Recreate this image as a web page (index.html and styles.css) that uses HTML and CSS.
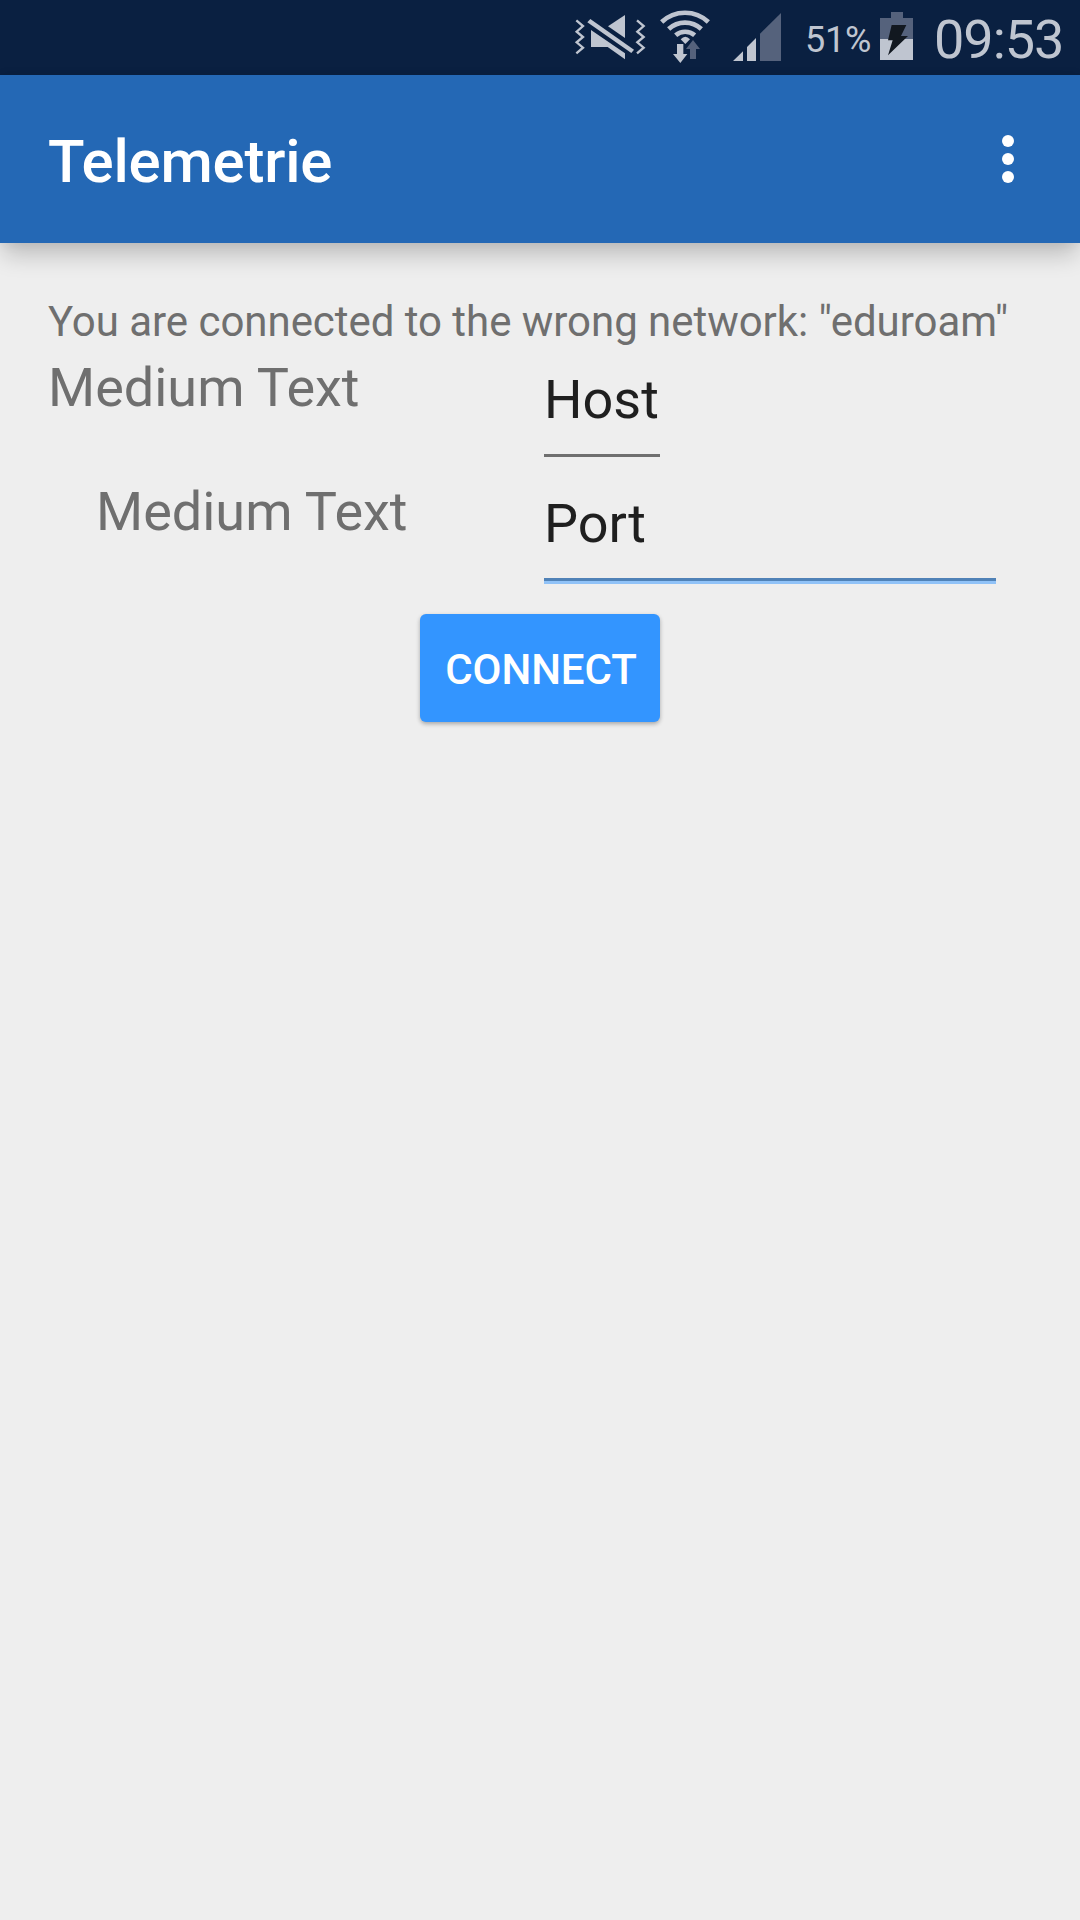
FILE: index.html
```html
<!DOCTYPE html>
<html lang="en">
<head>
<meta charset="utf-8">
<title>Telemetrie</title>
<link rel="stylesheet" href="styles.css">
</head>
<body>
<div class="status-bar">
  <svg class="icon-vibrate" width="72" height="48" viewBox="42 36 216 144" aria-hidden="true">
    <g fill="none" stroke="#bfc5d0" stroke-width="7">
      <path d="M49 61L69 78L50 95L69 111L50 127L69 143L49 160"/>
      <path d="M231 61L251 78L232 95L251 111L232 127L251 143L231 160"/>
    </g>
    <g fill="#bfc5d0">
      <path d="M195 45V114L144 79Z"/>
      <path d="M91 57L222 149L214 159L82 67Z"/>
      <path d="M93 90L195 160V178L143 141H93Z"/>
    </g>
  </svg>
  <svg class="icon-wifi" width="50" height="56" viewBox="300 24 150 168" aria-hidden="true">
    <g fill="none" stroke="#bfc5d0" stroke-width="14">
      <path d="M305 66A102 102 0 0 1 445 66"/>
      <path d="M326 87A72 72 0 0 1 424 87"/>
      <path d="M347 106A43 43 0 0 1 404 106"/>
    </g>
    <path fill="#bfc5d0" d="M362 118Q376 103 390 118L376 132Z"/>
    <path fill="#bfc5d0" d="M351 132H370V162H382L361 189L339 162H351Z"/>
    <path fill="#55627c" d="M399 120L420 147H408V177H390V147H378Z"/>
  </svg>
  <svg class="icon-signal" width="48" height="48" viewBox="519 39 144 144" aria-hidden="true">
    <path fill="#bfc5d0" d="M519 183L549 154V183ZM561 183V141L588 114V183Z"/>
    <path fill="#55627c" d="M600 183V101L663 39V183Z"/>
  </svg>
  <span class="battery-level">51%</span>
  <svg class="icon-battery" width="33" height="48" viewBox="240 36 99 144" aria-hidden="true">
    <path fill="#55627c" d="M273 36H309V54H339V117H240V54H273Z"/>
    <path fill="#bfc5d0" d="M240 117H339V180H240Z"/>
    <path fill="#121820" d="M275 75H319L303 108H324L264 166L278 121H264Z"/>
  </svg>
  <span class="clock">09:53</span>
</div>
<header class="toolbar">
  <h1 class="title">Telemetrie</h1>
  <button class="overflow" aria-label="More options"><i class="dot"></i><i class="dot"></i><i class="dot"></i></button>
</header>
<main class="content">
  <p class="message">You are connected to the wrong network: "eduroam"</p>
  <div class="row">
    <span class="label">Medium Text</span>
    <div class="field">Host</div>
  </div>
  <div class="row">
    <span class="label label-indented">Medium Text</span>
    <div class="field field-focused">Port</div>
  </div>
  <button class="connect">CONNECT</button>
</main>
</body>
</html>
```
FILE: styles.css
```css
* { box-sizing: border-box; }

body {
  margin: 0;
  height: 1920px;
  overflow: hidden;
  background: #eeeeee;
  font-family: Roboto, sans-serif;
}

button { border: 0; font-family: inherit; }

.status-bar {
  display: flex;
  justify-content: flex-end;
  height: 75px;
  padding-right: 13px;
  background: #0a2041;
  color: #bfc5d0;
}

.status-bar > * { flex: none; }

.icon-vibrate { margin: 12px 14px 0 0; }
.icon-wifi { margin: 8px 23px 0 0; }
.icon-signal { margin: 13px 24px 0 0; }
.icon-battery { margin: 12px 20px 0 0; }

.battery-level {
  width: 75px;
  padding-top: 19px;
  font-size: 36px;
  letter-spacing: -0.2px;
  line-height: 42px;
}

.clock {
  width: 134px;
  padding: 8px 0 0 1px;
  font-size: 54px;
  font-weight: 400;
  letter-spacing: -1px;
  line-height: 63px;
  white-space: nowrap;
}

.toolbar {
  display: flex;
  justify-content: space-between;
  align-items: center;
  height: 168px;
  padding: 0 48px;
  background: #2468b5;
  box-shadow: 0 15px 22px -3px rgba(0, 0, 0, 0.2), 0 1px 12px rgba(0, 0, 0, 0.06);
}

.title {
  margin: 0;
  padding-top: 6px;
  color: #ffffff;
  font-size: 60px;
  font-weight: 500;
  letter-spacing: -0.22px;
  line-height: 70px;
}

.overflow {
  display: flex;
  flex-direction: column;
  align-items: center;
  gap: 6px;
  width: 48px;
  padding: 0;
  background: none;
}

.dot {
  width: 12px;
  height: 12px;
  border-radius: 50%;
  background: #ffffff;
}

.content {
  display: flex;
  flex-direction: column;
  padding: 54px 48px 0;
}

.message {
  margin: 0;
  height: 59px;
  color: #6f6f6f;
  font-size: 42px;
  letter-spacing: -0.04px;
  line-height: 49px;
  white-space: nowrap;
}

.row {
  display: grid;
  grid-template-columns: 496px 452px;
  height: 124px;
  font-size: 54px;
  line-height: 64px;
}

.label { color: #6f6f6f; }
.label-indented { padding-left: 48px; }

.field {
  justify-self: start;
  width: 116px;
  height: 101px;
  padding-top: 12px;
  border-bottom: 3px solid #6f6f6f;
  color: #1f1f1f;
}

.field-focused {
  justify-self: stretch;
  width: auto;
  height: 104px;
  border-bottom-color: #90c2f7;
  box-shadow: inset 0 -3px #5082b7;
}

.connect {
  align-self: center;
  width: 240px;
  height: 108px;
  margin-top: 10px;
  padding: 3px 0 0 2px;
  border-radius: 6px;
  background: #3395ff;
  box-shadow: 0 2px 4px rgba(0, 0, 0, 0.3);
  color: #ffffff;
  font-size: 42px;
  font-weight: 500;
  letter-spacing: -0.1px;
  line-height: 50px;
}
```
